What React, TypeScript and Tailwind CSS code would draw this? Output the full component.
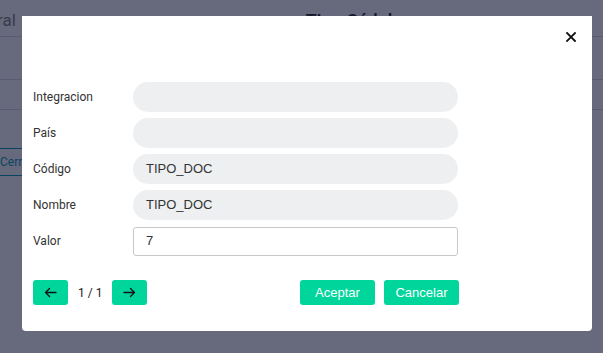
import React from 'react';

const fields = [
  { label: 'Integracion', value: '' },
  { label: 'País', value: '' },
  { label: 'Código', value: 'TIPO_DOC' },
  { label: 'Nombre', value: 'TIPO_DOC' },
];

function ArrowIcon({ dir }: { dir: 'left' | 'right' }) {
  return (
    <svg width="13" height="11" viewBox="0 0 13 11" fill="none" stroke="#111" strokeWidth="1.3" strokeLinecap="round" strokeLinejoin="round">
      {dir === 'left' ? (
        <path d="M12 5.5H1.5 M5.5 1.5L1.5 5.5l4 4" />
      ) : (
        <path d="M1 5.5h10.5 M7.5 1.5l4 4-4 4" />
      )}
    </svg>
  );
}

export default function App() {
  return (
    <div className="relative w-[603px] h-[353px] overflow-hidden bg-white font-['Roboto',sans-serif]">
      {/* page behind the modal */}
      <div className="flex flex-col">
        <div className="h-[37px] border-b border-[#dcdde2] flex items-start">
          <span className="-ml-[42px] pt-[8px] text-[17px] text-[#8a8a8a]">General</span>
          <span className="ml-[290px] pt-[7px] text-[18px] font-medium text-[#333]">Tipo Cédula</span>
        </div>
        <div className="h-[43px] border-b border-[#dcdde2]" />
        <div className="h-[30px] border-b border-[#dcdde2]" />
        <div className="h-[38px]" />
        <div className="-ml-[4px] w-[80px] h-[28px] border border-[#17a2b8] rounded-[3px] flex items-center px-[3px] text-[12px] text-[#17a2b8]">
          Cerrar
        </div>
      </div>

      {/* overlay */}
      <div className="absolute inset-0 bg-[rgba(0,7,37,0.6)]" />

      {/* modal */}
      <div className="absolute left-[22px] top-[16px] w-[570px] h-[315px] bg-white rounded-b-[4px] flex flex-col">
        <div className="h-[66px] flex justify-end items-start pt-[16px] pr-[16px]">
          <svg width="10" height="10" viewBox="0 0 10 10" stroke="#111" strokeWidth="1.8" strokeLinecap="square">
            <path d="M1 1l8 8M9 1l-8 8" />
          </svg>
        </div>

        <div className="px-[11px] flex flex-col gap-[6px]">
          {fields.map((f) => (
            <div key={f.label} className="flex items-center h-[30px]">
              <span className="w-[100px] text-[12px] text-[#333]">{f.label}</span>
              <div className="w-[325px] h-[30px] rounded-full bg-[#eeeff1] px-[13px] flex items-center text-[13px] text-[#333] font-['Liberation_Sans',sans-serif]">
                {f.value}
              </div>
            </div>
          ))}
          <div className="flex items-center h-[30px]">
            <span className="w-[100px] text-[12px] text-[#333]">Valor</span>
            <div className="w-[325px] h-[29px] rounded-[3px] border border-[#c8c8c8] px-[12px] flex items-center text-[13px] text-[#333] font-['Liberation_Sans',sans-serif]">
              7
            </div>
          </div>
        </div>

        <div className="mt-[24px] ml-[11px] w-[426px] flex justify-between items-center">
          <div className="flex items-center gap-[10px]">
            <button className="w-[35px] h-[25px] rounded-[3px] bg-[#00d59b] flex items-center justify-center">
              <ArrowIcon dir="left" />
            </button>
            <span className="text-[12px] text-[#222]">1 / 1</span>
            <button className="w-[35px] h-[25px] rounded-[3px] bg-[#00d59b] flex items-center justify-center">
              <ArrowIcon dir="right" />
            </button>
          </div>
          <div className="flex items-center gap-[9px] font-['Liberation_Sans',sans-serif]">
            <button className="w-[75px] h-[25px] rounded-[3px] bg-[#00d59b] text-white text-[13px]">Aceptar</button>
            <button className="w-[75px] h-[25px] rounded-[3px] bg-[#00d59b] text-white text-[13px]">Cancelar</button>
          </div>
        </div>
      </div>
    </div>
  );
}
